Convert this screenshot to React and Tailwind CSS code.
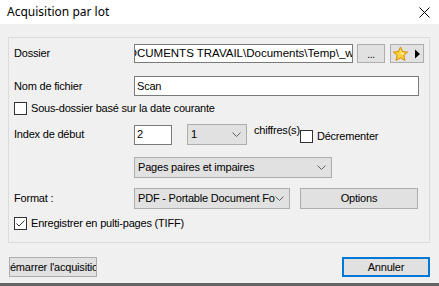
import React from 'react';

const font = { fontFamily: '"Liberation Sans", Arial, sans-serif' };

const Chevron = () => (
    <svg width="9" height="5" viewBox="0 0 9 5" className="shrink-0">
        <path d="M0.5 0.5 L4.5 4.5 L8.5 0.5" fill="none" stroke="#606060" strokeWidth="1" />
    </svg>
);

const Checkbox = ({ checked, label }) => (
    <div className="flex items-center h-[13px]">
        <div className="w-[13px] h-[13px] bg-white border border-[#333333] flex items-center justify-center shrink-0">
            {checked && (
                <svg width="11" height="11" viewBox="0 0 11 11">
                    <path d="M1.5 5.5 L4 8 L9.5 2.5" fill="none" stroke="#333333" strokeWidth="1" />
                </svg>
            )}
        </div>
        {label && <span className="ml-[4px] whitespace-nowrap">{label}</span>}
    </div>
);

const Combo = ({ text, className }) => (
    <div className={`flex items-center bg-[#e1e1e1] border border-[#adadad] pl-[3px] pr-[5px] ${className}`}>
        <span className="flex-1 overflow-hidden whitespace-nowrap">{text}</span>
        <Chevron />
    </div>
);

const Button = ({ children, className }) => (
    <div className={`flex items-center justify-center overflow-hidden whitespace-nowrap bg-[#e1e1e1] border border-[#adadad] ${className}`}>
        {children}
    </div>
);

export default function App() {
    return (
        <div className="w-[439px] h-[286px] bg-[#f0f0f0] flex flex-col text-black text-[11px] tracking-[-0.2px] overflow-hidden" style={font}>
            {/* title bar */}
            <div className="h-[24px] bg-white flex items-center justify-between pl-[7px] pr-[9px] shrink-0">
                <span className="text-[12px] tracking-normal" style={{ fontFamily: '"Noto Sans", sans-serif' }}>Acquisition par lot</span>
                <svg width="11" height="11" viewBox="0 0 11 11">
                    <path d="M0.5 0.5 L10.5 10.5 M10.5 0.5 L0.5 10.5" stroke="#000" strokeWidth="1" />
                </svg>
            </div>

            {/* group box */}
            <div className="ml-[8px] mt-[13px] w-[422px] h-[206px] border border-[#dcdcdc] pl-[5px] flex flex-col shrink-0">
                <div className="mt-[6px] h-[19px] flex items-center">
                    <span className="w-[120px]">Dossier</span>
                    <div className="w-[219px] h-[19px] bg-white border border-[#7a7a7a] overflow-hidden flex items-center">
                        <span className="whitespace-nowrap ml-[-7px] text-[11.5px] tracking-normal">OCUMENTS TRAVAIL\Documents\Temp\_work</span>
                    </div>
                    <Button className="ml-[4px] w-[28px] h-[19px]">
                        <span className="text-[10px] leading-none mt-[3px]">...</span>
                    </Button>
                    <div className="ml-[5px] w-[34px] h-[19px] bg-[#e1e1e1] border border-[#adadad] flex items-center pl-[1px]">
                        <svg width="17" height="16" viewBox="0 0 17 16">
                            <path d="M8.5 1 L10.6 5.6 L15.6 6.1 L11.8 9.4 L12.9 14.4 L8.5 11.8 L4.1 14.4 L5.2 9.4 L1.4 6.1 L6.4 5.6 Z" fill="#ffd13d" stroke="#d48a00" strokeWidth="1" strokeLinejoin="round" />
                            <path d="M8.5 3.5 L9.9 6.6 L13 7 L10.7 9 L8.5 8 Z" fill="#fff2a8" opacity="0.7" />
                        </svg>
                        <svg width="7" height="10" viewBox="0 0 7 10" className="ml-[5px]">
                            <path d="M1 0.5 L6 5 L1 9.5 Z" fill="#000" />
                        </svg>
                    </div>
                </div>

                <div className="mt-[13px] h-[20px] flex items-center">
                    <span className="w-[120px]">Nom de fichier</span>
                    <div className="w-[285px] h-[20px] bg-white border border-[#7a7a7a] flex items-center pl-[2px]">Scan</div>
                </div>

                <div className="mt-[6px]">
                    <Checkbox label="Sous-dossier basé sur la date courante" />
                </div>

                <div className="mt-[9px] h-[21px] flex items-center">
                    <span className="w-[120px]">Index de début</span>
                    <div className="w-[38px] h-[20px] bg-white border border-[#7a7a7a] flex items-center pl-[2px]">2</div>
                    <Combo text="1" className="ml-[15px] w-[60px] h-[21px]" />
                    <span className="ml-[7px] self-start mt-[-2px] whitespace-nowrap">chiffres(s)</span>
                    <div className="mt-[4px]">
                        <Checkbox label="Décrementer" />
                    </div>
                </div>

                <div className="mt-[12px] h-[21px] flex items-center">
                    <div className="w-[120px]" />
                    <Combo text="Pages paires et impaires" className="w-[198px] h-[21px]" />
                </div>

                <div className="mt-[10px] h-[21px] flex items-center">
                    <span className="w-[120px]">Format :</span>
                    <Combo text="PDF - Portable Document Format" className="w-[156px] h-[21px]" />
                    <Button className="ml-[10px] w-[118px] h-[21px]">Options</Button>
                </div>

                <div className="mt-[8px]">
                    <Checkbox checked label="Enregistrer en pulti-pages (TIFF)" />
                </div>
            </div>

            {/* bottom buttons */}
            <div className="mt-[14px] h-[20px] flex items-center justify-between pl-[9px] pr-[9px] shrink-0">
                <Button className="w-[88px] h-[20px]">Démarrer l'acquisition</Button>
                <div className="w-[88px] h-[20px] flex items-center justify-center bg-[#e1e1e1] border-2 border-[#0078d7]">Annuler</div>
            </div>

            <div className="flex-1" />
            <div className="h-[3px] bg-[#646464] shrink-0" />
        </div>
    );
}
